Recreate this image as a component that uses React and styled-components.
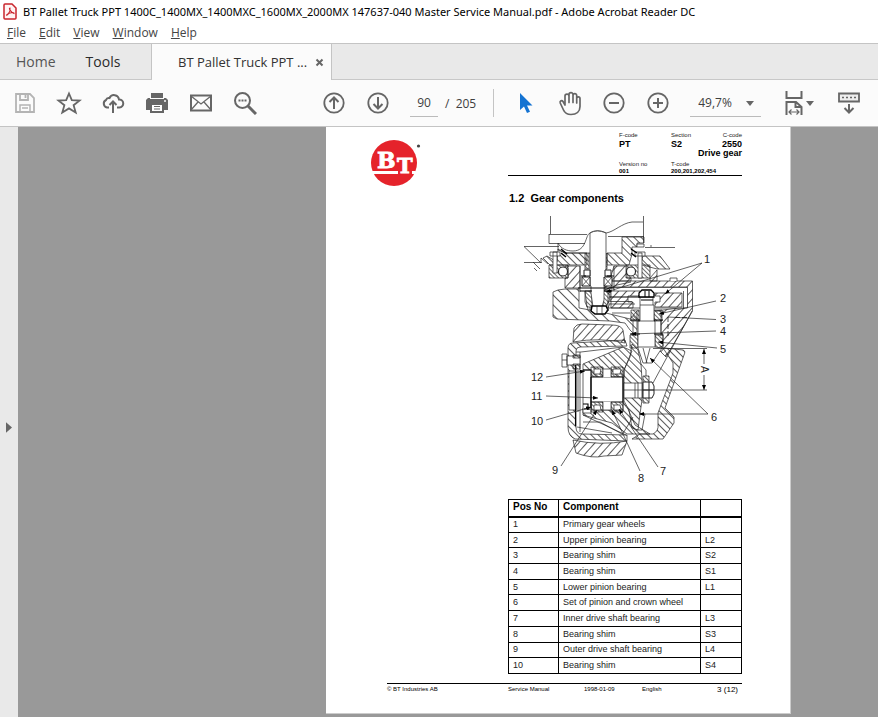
import React from 'react';
import styled, { createGlobalStyle } from 'styled-components';

const GlobalStyle = createGlobalStyle`
  *, *::before, *::after { box-sizing: border-box; }
  body { margin: 0; background: #999; font-family: "Open Sans", "Noto Sans", sans-serif; }
  button, input, select { font: inherit; color: inherit; border: 0; background: none; padding: 0; margin: 0; border-radius: 0; }
  svg { display: block; }
`;

const Window = styled.div`
  min-height: 100vh;
  display: flex;
  flex-direction: column;
  background: #999;
  overflow: hidden;
`;

const TitleBar = styled.header`
  display: flex;
  align-items: center;
  gap: 6px;
  height: 23px;
  padding: 0 3px;
  background: #fff;
  color: #000;
  font-size: 12px;
  white-space: nowrap;
`;

const WindowTitle = styled.h1`
  margin: 0;
  font-family: "Noto Sans", "Open Sans", sans-serif;
  font-size: 11px;
  font-weight: 400;
  line-height: 22px;
`;

const MenuBar = styled.nav`
  display: flex;
  gap: 13px;
  height: 20px;
  padding: 0 7px;
  background: #fff;
  color: #444;
  font-size: 12px;
  line-height: 18px;
`;

const MenuButton = styled.button`
  line-height: 18px;
  height: 20px;
`;

const TabBar = styled.div`
  display: flex;
  height: 37px;
  background: #e9e9e9;
  border-top: 1px solid #c4c4c4;
  border-bottom: 1px solid #c8c8c8;
`;

const HomeTabs = styled.div`
  display: flex;
  gap: 30px;
  width: 152px;
  padding-left: 16px;
  border-right: 1px solid #c4c4c4;
`;

const Tab = styled.button`
  font-size: 14px;
  color: ${(p) => (p.$strong ? '#2b2b2b' : '#555')};
`;

const DocumentTab = styled.div`
  display: flex;
  align-items: center;
  gap: 8px;
  height: 36px;
  padding: 0 7px 0 26px;
  background: #fbfbfb;
  border-right: 1px solid #c4c4c4;
  color: #333;
  font-size: 13px;
`;

const Toolbar = styled.div`
  display: flex;
  align-items: center;
  height: 47px;
  padding-left: 3px;
  background: #fbfbfb;
  border-bottom: 1px solid #c4c4c4;
  color: #404040;
  font-size: 12px;
  white-space: nowrap;
`;

const ToolGroup = styled.div`
  display: flex;
  align-items: center;
  flex: none;
  margin-left: ${(p) => p.$gap || 0}px;
`;

const ToolButton = styled.button`
  display: flex;
  align-items: center;
  justify-content: center;
  gap: 3px;
  flex: none;
  width: 44px;
  height: 44px;
`;

const PageInput = styled.input`
  width: 28px;
  height: 27px;
  border-bottom: 1px solid #bbb;
  text-align: center;
`;

const PageCount = styled.span`
  margin-left: 7px;
  white-space: pre;
`;

const Divider = styled.span`
  width: 1px;
  height: 28px;
  margin: 0 10px 0 17px;
  background: #c4c4c4;
`;

const ZoomBox = styled.label`
  display: grid;
  align-items: center;
  width: 71px;
  margin: 0 16px 0 10px;
  & > * { grid-area: 1 / 1; }
  & > svg { justify-self: end; margin-right: 7px; pointer-events: none; }
`;

const ZoomSelect = styled.select`
  appearance: none;
  height: 27px;
  padding-left: 8px;
  border-bottom: 1px solid #bbb;
`;

const Workspace = styled.main`
  display: flex;
  flex: 1;
`;

const Rail = styled.button`
  display: flex;
  align-items: center;
  width: 18px;
  padding: 10px 0 0 6px;
  background: #e9e9e9;
`;

const Viewer = styled.div`
  flex: 1;
  display: grid;
  grid-template-columns: minmax(0, 308fr) auto minmax(0, 87fr);
  align-items: start;
`;

const Sheet = styled.article`
  grid-column: 2;
  padding: 5px 48px 18px 45px;
  margin-bottom: 2px;
  background: #fff;
  border-bottom: 1px solid #ccc;
  border-right: 1px solid #ccc;
  color: #000;
  font-family: "Liberation Sans", Arial, sans-serif;
`;

const SheetBody = styled.div`
  display: grid;
  grid-template-columns: 137px 234px;
`;

const LogoCell = styled.div`
  padding-top: 7px;
`;

const CodeGrid = styled.dl`
  display: grid;
  grid-template-columns: 52px 1fr auto;
  grid-template-rows: 7px 9px 11px 9px 7px;
  height: 44px;
  margin: 0;
  padding-left: 111px;
  border-bottom: 1px solid #000;
  white-space: nowrap;
  font-weight: 700;
`;

const CodeLabel = styled.dt`
  font-size: 6px;
  font-weight: 400;
  line-height: 8px;
  text-align: ${(p) => (p.$right ? 'right' : 'left')};
  color: #222;
  grid-row: ${(p) => p.$row};
  align-self: end;
`;

const CodeValue = styled.dd`
  margin: 0;
  font-size: ${(p) => (p.$small ? 6 : 9)}px;
  line-height: ${(p) => (p.$small ? 7 : 10)}px;
  grid-row: ${(p) => p.$row};
  grid-column: ${(p) => p.$col};
  text-align: ${(p) => (p.$right ? 'right' : 'left')};
`;

const SectionTitle = styled.h2`
  margin: 15px 0 5px 1px;
  font-size: 11px;
  line-height: 15px;
  white-space: pre;
`;

const Figure = styled.figure`
  margin: 0 0 10px;
`;

const PartsTable = styled.table`
  width: 100%;
  height: 175px;
  table-layout: fixed;
  border-collapse: collapse;
  font-size: 9px;
  line-height: 10px;
  text-align: left;
  color: #222;

  th, td { height: 15px; padding: 0 0 1px 4px; border: 1px solid #000; }
  thead th { height: 17px; font-size: 10px; line-height: 12px; border-bottom-width: 2px; color: #000; }
`;

const SheetFooter = styled.footer`
  display: grid;
  grid-template-columns: 121px 76px 58px 1fr auto;
  margin: 9px 0 0 16px;
  padding: 1px 4px 0 0;
  border-top: 1px solid #000;
  font-size: 6px;
  line-height: 8px;
`;

const PageNumber = styled.span`
  font-size: 8px;
  line-height: 10px;
`;

const g = '#666';

const PdfIcon = () => (
  <svg width="14" height="17" viewBox="0 0 14 17" fill="none">
    <path d="M1 2Q1 1 2 1H9L13 5V15Q13 16 12 16H2Q1 16 1 15Z" fill="#fff4f4" stroke="#c9252d" strokeWidth="1.500" />
    <path d="M7 5C5 5 9 10 11 10.500C12 9 5 9.500 3.500 12C3 13.500 8 9 7 5Z" stroke="#c9252d" strokeWidth="1.100" />
  </svg>
);

const CloseIcon = () => (
  <svg width="9" height="9" viewBox="0 0 9 9"><path d="M1.500 1.500L7.500 7.500M7.500 1.500L1.500 7.500" stroke="#666" strokeWidth="2" /></svg>
);

const SaveIcon = () => (
  <svg width="22" height="22" viewBox="0 0 22 22" fill="none" stroke="#b4b4b4" strokeWidth="1.800">
    <path d="M2 2H16L20 6V20H2Z" /><path d="M6 2V8H14V2" /><path d="M11.500 3V6" /><path d="M6 20V13H16V20M8 16H14" strokeWidth="1.500" />
  </svg>
);
const StarIcon = () => (
  <svg width="26" height="24" viewBox="0 0 26 24" fill="none" stroke={g} strokeWidth="1.800" strokeLinejoin="miter">
    <path d="M13 2.500L15.800 9.200L23.500 9.600L17.600 14.200L19.700 21.500L13 17.400L6.300 21.500L8.400 14.200L2.500 9.600L10.200 9.200Z" />
  </svg>
);
const CloudIcon = () => (
  <svg width="24" height="24" viewBox="0 0 24 24" fill="none" stroke={g} strokeWidth="2">
    <path d="M8 16.500H6A4 4 0 0 1 5 9A3 3 0 0 1 8.500 7A5 5 0 0 1 18 8.500A4 4 0 0 1 18.500 16.500H16" />
    <path d="M12 22V11M8.500 14L12 10.500L15.500 14" />
  </svg>
);
const PrintIcon = () => (
  <svg width="24" height="22" viewBox="0 0 24 22">
    <path d="M6 1H18V6H6Z" fill={g} /><path d="M3 6H21L23 8V18H1V8Z" fill={g} />
    <path d="M5 6.500H19" stroke="#fbfbfb" /><circle cx="20" cy="9" r="1" fill="#fbfbfb" />
    <path d="M6 12H18V20H6Z" fill="#fff" stroke={g} strokeWidth="2" /><path d="M9 14.500H15M9 17H15" stroke={g} />
  </svg>
);
const MailIcon = () => (
  <svg width="24" height="18" viewBox="0 0 24 18" fill="none" stroke={g}>
    <path d="M2 1.500H22V16.500H2Z" strokeWidth="2" /><path d="M2 2L12 10L22 2M2 16L9 8M22 16L15 8" strokeWidth="1.300" />
  </svg>
);
const SearchIcon = () => (
  <svg width="24" height="24" viewBox="0 0 24 24" fill="none" stroke={g}>
    <circle cx="9.500" cy="9.500" r="7.500" strokeWidth="2" /><path d="M15 15L23 23" strokeWidth="3" />
    <path d="M5.500 9.500H13.500" strokeWidth="2" strokeDasharray="2 1" />
  </svg>
);
const CircleIcon = ({ d }) => (
  <svg width="22" height="22" viewBox="0 0 22 22" fill="none" stroke={g} strokeWidth="2">
    <circle cx="11" cy="11" r="9.700" strokeWidth="1.800" /><path d={d} />
  </svg>
);
const CursorIcon = () => (
  <svg width="14" height="22" viewBox="0 0 14 22"><path d="M1 1V18L5 14.500L8 21L11 19.700L8 13.500H13.500Z" fill="#1473d2" /></svg>
);
const HandIcon = () => (
  <svg width="24" height="25" viewBox="0 0 24 25" fill="none" stroke={g} strokeWidth="1.700" strokeLinecap="round" strokeLinejoin="round">
    <path d="M7 14L5 10.500C4 9 1.500 9.800 2.200 12L5.500 19C7 22.500 9.500 23.500 13 23.500C18.500 23.500 22 20.500 22 15.500V7.500C22 5.200 18.700 5.200 18.700 7.500V12M18.700 10V4.500C18.700 2 15 2 15 4.500V11.500M15 6V3.500C15 1 11 1 11 3.500V11.500M11 6V5C11 2.500 7 2.500 7 5V14" />
  </svg>
);
const Caret = () => (
  <svg width="8" height="5" viewBox="0 0 8 5"><path d="M0 0H8L4 5Z" fill={g} /></svg>
);
const FitIcon = () => (
  <svg width="18" height="26" viewBox="0 0 18 26" fill="none" stroke={g} strokeWidth="2">
    <path d="M1.500 1V8H16.500V1" /><path d="M1.500 25V12H11L16.500 17V25M10.500 12V17H16" />
    <path d="M4 22H14M6.500 19.500L4 22L6.500 24.500M11.500 19.500L14 22L11.500 24.500" strokeWidth="1.200" />
  </svg>
);
const KeyboardIcon = () => (
  <svg width="22" height="22" viewBox="0 0 22 22" fill="none" stroke={g} strokeWidth="2">
    <path d="M1 1.500H21V9.500H1Z" fill="#eee" strokeWidth="1.800" /><path d="M4 5.500H18" strokeWidth="1.500" strokeDasharray="2 2" />
    <path d="M11 12V20M6.500 16L11 20.500L15.500 16" />
  </svg>
);

const BtLogo = () => (
  <svg width="52" height="48" viewBox="371 139 52 48" role="img" aria-label="BT">
    <circle cx="394" cy="163" r="23" fill="#e5232b" />
    <g fill="#fff" stroke="#fff" strokeWidth="0.800" fontFamily='"DejaVu Serif", serif' fontWeight="700">
      <text x="377" y="168" fontSize="22">B</text>
      <text x="397" y="173" fontSize="21">T</text>
    </g>
    <path d="M371.500 171H398V174H373Z" fill="#fff" /><path d="M412 171H416L415 174H412Z" fill="#fff" />
    <circle cx="418.500" cy="146" r="1.600" fill="#444" />
  </svg>
);

const LABELS = [
  [704, 263, '1'], [720, 302, '2'], [720, 323, '3'], [720, 335, '4'], [720, 353, '5'], [711, 421, '6'],
  [660, 475, '7'], [638, 482, '8'], [552, 474, '9'], [531, 425, '10'], [531, 400, '11'], [531, 381, '12'],
];

const GearDrawing = () => (
  <svg width="100%" viewBox="508 211 234 278" role="img" aria-label="Cross section of the drive gear with numbered parts">
    <defs>
      <pattern id="back" width="5" height="5" patternUnits="userSpaceOnUse" patternTransform="rotate(-45)"><path d="M0 0V5" stroke="#222" strokeWidth="1.500" /></pattern>
      <pattern id="wide" width="7" height="7" patternUnits="userSpaceOnUse" patternTransform="rotate(-45)"><path d="M0 0V7" stroke="#222" strokeWidth="1.500" /></pattern>
      <pattern id="forward" width="6" height="6" patternUnits="userSpaceOnUse" patternTransform="rotate(42)"><path d="M0 0V6" stroke="#222" strokeWidth="1.500" /></pattern>
      <pattern id="dense" width="3" height="3" patternUnits="userSpaceOnUse" patternTransform="rotate(-45)"><path d="M0 0V3" stroke="#222" strokeWidth="1.300" /></pattern>
      <marker id="tip" markerWidth="5" markerHeight="4" refX="5" refY="2" orient="auto-start-reverse" markerUnits="userSpaceOnUse"><path d="M0 0L5 2L0 4Z" fill="#000" stroke="none" /></marker>
    </defs>
    <g fill="none" stroke="#222" strokeWidth="0.700">
      {/* motor flange and ground line */}
      <path d="M550.500 216V234M643.500 216V243M549 234.500H587M549 234V243.500M549 243.500H585M608 236.500H644M524 246.500H559M524 246.500L541 263M524 262.500H542M541 262V258L548 264M533 262L540 269M534 268L537 271M645 247.500H675M651 247V245" />
      <path d="M643 222H632C622 223 614 232 606 233C601 230 594 230 590 233C585 235 587 251 573 251C567 251 561 249 558 243V250L565 253H590" />
      {/* upper housing */}
      <path d="M558 249L565 253H587V265H550L543 258L547 256L557 262Z" fill="url(#back)" />
      <path d="M622 237H644V243H637V247H632V254L629 265H607V253H622Z" fill="url(#back)" />
      <path d="M643 256H660L670 269H657L646 266L641 262Z" fill="url(#back)" />
      <path d="M565 266H580V288H565V278H568V268Z" fill="url(#forward)" />
      <path d="M614 266H627V278H631V281H611V276Z" fill="url(#forward)" />
      <path d="M657 270L650 278V281H657V270" fill="url(#forward)" />
      <path d="M549 265H568V278H549ZM626 265H650V278H626Z" fill="url(#dense)" />
      <circle cx="563" cy="271.500" r="4.500" fill="#fff" strokeWidth="1.100" /><circle cx="631" cy="271.500" r="4.500" fill="#fff" strokeWidth="1.100" />
      <path d="M553 252H557V273H553ZM550 252H560V256H550ZM638 253H642V278H638ZM635 252H645V256H635ZM637 244H644V247H637Z" fill="#fff" />
      <path d="M561 249L567 254M561 253L566 257M631 249L637 253M631 253L636 257" stroke="#000" strokeWidth="1.500" />
      {/* lower left casing */}
      <path d="M553 292L558 290L565 289H579V308L590 310L606 313L630 319L637 311V333H633L630 330L625 323L610 321L557 319L553 317Z" fill="url(#wide)" />
      {/* gear cover */}
      <path d="M611 281H692.500V311L680 333L666 357L657 348L663 346V334H661V311H655L687 307V287H611L600 292Z" fill="url(#forward)" />
      <path d="M670 281V278H677V281" fill="#fff" />
      <path d="M611 287.500H687.500V308H611Z" fill="#fff" />
      <path d="M608 291H640V296H628V302H633V308H608ZM655 293H682V307H655V302H660V296H655Z" fill="url(#forward)" />
      <path d="M610 301.500H632M683.500 291V309M610 304H635M608 288V291M600 292L617 285L631 282" />
      {/* motor shaft and bearings */}
      <path d="M585 253V269H589V253M607 253V269H603V253" fill="url(#dense)" />
      <path d="M585 291H592V307H587ZM603 291H610V298L606 307H603Z" fill="url(#dense)" />
      <path d="M590 233Q597 229 606 233V286H604V300L602 307H593L591 293V286H590Z" fill="#fff" />
      <path d="M584 270H590V276H584ZM605 270H611V276H605ZM582 277H590V286H582ZM604 277H612V286H604Z" fill="#fff" strokeWidth="1" />
      <path d="M582 277L590 286M590 277L582 286M604 277L612 286M612 277L604 286M580 266V292M614 266V291" />
      <path d="M578 288H614M580 291H592M604 291H612M581 276H586M607 276H614" stroke="#000" strokeWidth="1.200" />
      <path d="M592 306L591 311L595 314H605L608 310L606 306Z" fill="#fff" strokeWidth="1.500" stroke="#000" />
      <path d="M597 306V314M602 306V314M590 307V311M608 307V311M610 303L606 313M612 313H630M585 291V302L588 309" />
      {/* pinion shaft */}
      <path d="M631 310H639V321H631ZM654 310H662V321H654ZM630 335H638V348H630ZM655 335H663V348H655Z" fill="url(#dense)" />
      <path d="M640 297H653V305H654V321H655V347L662 348L652 363H643L638 348V321H640Z" fill="#fff" />
      <path d="M643 348L647 363M650 348L646 363M638 321H655M640 305H653M638 347H655M633 320V336M661 320V336" />
      <path d="M639 297V293L642 290H651L654 293V297Z" fill="#fff" stroke="#000" strokeWidth="1.300" />
      <path d="M645 291V297M649 291V297M630 320H640M654 320H663M630 334H640M654 334H663M641 300H653M609 297H640" stroke="#000" strokeWidth="1" />
      <path d="M668 317V336M675 317.500H687" stroke="#000" strokeDasharray="5 2" />
      {/* right housing */}
      <path d="M665 348L683 350Q686 351 684 355L665 408L674 417V423L663 439H632L640 434H653Q659 431 658 424V413L673 373V363L663 348Z" fill="url(#back)" />
      <path d="M692 311L653 383" />
      {/* tyre */}
      <path d="M573 342L574 328Q576 324 582 324L612 325Q621 325 623 330L625 343Q600 337 573 342Z" fill="url(#forward)" />
      <path d="M573 440L576 453Q592 459 604 456L622 455L627 441Q600 446 573 440Z" fill="url(#forward)" />
      {/* wheel rim */}
      <path fillRule="evenodd" d="M568 348Q568 343 573 343L625 340L627 346L580 347Q576 347 576 351V427Q576 434 582 434L627 435V441L575 439Q568 436 568 427Z" fill="url(#back)" />
      <path d="M583 364L623 347L632 351L624 370V377H591V371H583Z" fill="url(#back)" />
      <path d="M591 408H583V415L612 423L627 434H650L635 425L628 409L623 402V410H591Z" fill="url(#back)" />
      <path d="M581 352L623 347M583 415L626 435M580 352V432M576 352H581M577 427L612 433M583 422H600L622 434M622 435L633 417" />
      {/* crown wheel */}
      <path d="M632 344L638 350L641 364L642 380V400L640 414L638 430L632 428L629 410L624 401V370L630 357Z" fill="url(#back)" />
      <path d="M640 414H645L642 430H636M641 364L646 370V376" />
      {/* hub and bearings */}
      <path d="M569 371H576V410H569ZM578 370V412M583 370H591V413H583ZM591 377H623V402H591ZM624 383H642V398H624ZM635 383V398M638 383V398" fill="#fff" />
      <path d="M591 367H603V377H591ZM611 367H623V377H611ZM591 402H603V412H591ZM611 402H623V412H611Z" fill="url(#dense)" />
      <path d="M594 369H601L600 374H594ZM613 369H621L620 374H613ZM594 405H600L601 410H594ZM614 405H620L621 410H614Z" fill="#fff" />
      <path d="M603 377V369H611V377M603 402V410H611V402" fill="#fff" />
      <path d="M583 370H591M584 409H590M591 377V408M575.500 359V426M623 377V402M583 404H588V410" stroke="#000" strokeWidth="1.100" />
      <path d="M562 354H567V367H562ZM567 356H580V365H567ZM562 360H567" fill="#fff" />
      <path d="M573 355H580V358H573ZM573 364H580V369H573Z" fill="url(#dense)" />
      <path d="M643 376H649V403H643Z" fill="url(#dense)" />
      <path d="M643 382H652L654 386V394L652 398H643ZM643 390H654M649 382V398" fill="#fff" strokeWidth="1" />
      {/* dimension and leader lines */}
      <path d="M653 348.500H707M624 390H707" />
      <g stroke="#222">
        <path d="M704 364V349" markerEnd="url(#tip)" />
        <path d="M704 375V390" markerEnd="url(#tip)" />
        <path d="M702 263L665 294" markerEnd="url(#tip)" />
        <path d="M702 263L606 292" markerEnd="url(#tip)" />
        <path d="M716 301L659 314" markerEnd="url(#tip)" />
        <path d="M708 414L650 358" markerEnd="url(#tip)" />
        <path d="M708 414H639" markerEnd="url(#tip)" />
        <path d="M716 319.500L668 317" />
        <path d="M716 331L631 334" markerEnd="url(#tip)" />
        <path d="M717 348L658 342" markerEnd="url(#tip)" />
        <path d="M546 377L585 371" markerEnd="url(#tip)" />
        <path d="M546 396L598 398" markerEnd="url(#tip)" />
        <path d="M546 420L591 407" markerEnd="url(#tip)" />
        <path d="M561 466L597 410" markerEnd="url(#tip)" />
        <path d="M640 471L612 410" markerEnd="url(#tip)" />
        <path d="M658 467L619 409" markerEnd="url(#tip)" />
      </g>
    </g>
    <g fontFamily='"Liberation Sans", Arial, sans-serif' fontSize="11" fill="#222">
      {LABELS.map(([x, y, label]) => <text key={label} x={x} y={y}>{label}</text>)}
      <text transform="translate(701 366) rotate(90)" fontSize="10">A</text>
    </g>
  </svg>
);

const MENUS = ['File', 'Edit', 'View', 'Window', 'Help'];

const PARTS = [
  ['1', 'Primary gear wheels', ''],
  ['2', 'Upper pinion bearing', 'L2'],
  ['3', 'Bearing shim', 'S2'],
  ['4', 'Bearing shim', 'S1'],
  ['5', 'Lower pinion bearing', 'L1'],
  ['6', 'Set of pinion and crown wheel', ''],
  ['7', 'Inner drive shaft bearing', 'L3'],
  ['8', 'Bearing shim', 'S3'],
  ['9', 'Outer drive shaft bearing', 'L4'],
  ['10', 'Bearing shim', 'S4'],
];

export default function App() {
  return (
    <Window>
      <GlobalStyle />
      <TitleBar>
        <PdfIcon />
        <WindowTitle>BT Pallet Truck PPT 1400C_1400MX_1400MXC_1600MX_2000MX 147637-040 Master Service Manual.pdf - Adobe Acrobat Reader DC</WindowTitle>
      </TitleBar>
      <MenuBar>
        {MENUS.map((name) => <MenuButton key={name}><u>{name[0]}</u>{name.slice(1)}</MenuButton>)}
      </MenuBar>
      <TabBar>
        <HomeTabs>
          <Tab>Home</Tab>
          <Tab $strong>Tools</Tab>
        </HomeTabs>
        <DocumentTab>
          <span>BT Pallet Truck PPT ...</span>
          <button aria-label="Close tab"><CloseIcon /></button>
        </DocumentTab>
      </TabBar>
      <Toolbar>
        <ToolGroup>
          <ToolButton aria-label="Save" disabled><SaveIcon /></ToolButton>
          <ToolButton aria-label="Star"><StarIcon /></ToolButton>
          <ToolButton aria-label="Upload"><CloudIcon /></ToolButton>
          <ToolButton aria-label="Print"><PrintIcon /></ToolButton>
          <ToolButton aria-label="Email"><MailIcon /></ToolButton>
          <ToolButton aria-label="Find"><SearchIcon /></ToolButton>
        </ToolGroup>
        <ToolGroup $gap={45}>
          <ToolButton aria-label="Previous page"><CircleIcon d="M11 17V6M6.500 10L11 5.500L15.500 10" /></ToolButton>
          <ToolButton aria-label="Next page"><CircleIcon d="M11 5V16M6.500 12L11 16.500L15.500 12" /></ToolButton>
        </ToolGroup>
        <ToolGroup $gap={10}>
          <PageInput aria-label="Page number" defaultValue="90" />
          <PageCount>{'/  205'}</PageCount>
          <Divider />
        </ToolGroup>
        <ToolGroup>
          <ToolButton aria-label="Select"><CursorIcon /></ToolButton>
          <ToolButton aria-label="Pan"><HandIcon /></ToolButton>
          <ToolButton aria-label="Zoom out"><CircleIcon d="M6 11H16" /></ToolButton>
          <ToolButton aria-label="Zoom in"><CircleIcon d="M6 11H16M11 6V16" /></ToolButton>
          <ZoomBox>
            <ZoomSelect aria-label="Zoom level" defaultValue="49,7%"><option>49,7%</option></ZoomSelect>
            <Caret />
          </ZoomBox>
          <ToolButton aria-label="Fit width"><FitIcon /><Caret /></ToolButton>
        </ToolGroup>
        <ToolGroup $gap={6}>
          <ToolButton aria-label="Show toolbar"><KeyboardIcon /></ToolButton>
        </ToolGroup>
      </Toolbar>
      <Workspace>
        <Rail aria-label="Open navigation pane">
          <svg width="6" height="11" viewBox="0 0 7 12"><path d="M0 0L7 6L0 12Z" fill="#666" /></svg>
        </Rail>
        <Viewer>
          <Sheet>
            <SheetBody>
              <LogoCell><BtLogo /></LogoCell>
              <div>
                <CodeGrid>
                  <CodeLabel $row={1}>F-code</CodeLabel>
                  <CodeValue $row={2} $col={1}>PT</CodeValue>
                  <CodeLabel $row={1}>Section</CodeLabel>
                  <CodeValue $row={2} $col={2}>S2</CodeValue>
                  <CodeLabel $row={1} $right>C-code</CodeLabel>
                  <CodeValue $row={2} $col={3} $right>2550</CodeValue>
                  <CodeValue $row={3} $col="2 / 4" $right>Drive gear</CodeValue>
                  <CodeLabel $row={4}>Version no</CodeLabel>
                  <CodeValue $row={5} $col={1} $small>001</CodeValue>
                  <CodeLabel $row={4}>T-code</CodeLabel>
                  <CodeValue $row={5} $col="2 / 4" $small>200,201,202,454</CodeValue>
                </CodeGrid>
                <SectionTitle>{'1.2  Gear components'}</SectionTitle>
                <Figure><GearDrawing /></Figure>
                <PartsTable>
                  <colgroup><col width="50" /><col /><col width="41" /></colgroup>
                  <thead><tr><th>Pos No</th><th>Component</th><th aria-label="Code" /></tr></thead>
                  <tbody>
                    {PARTS.map(([pos, name, code]) => (
                      <tr key={pos}><td>{pos}</td><td>{name}</td><td>{code}</td></tr>
                    ))}
                  </tbody>
                </PartsTable>
              </div>
            </SheetBody>
            <SheetFooter>
              <span>© BT Industries AB</span>
              <span>Service Manual</span>
              <span>1998-01-09</span>
              <span>English</span>
              <PageNumber>3 (12)</PageNumber>
            </SheetFooter>
          </Sheet>
        </Viewer>
      </Workspace>
    </Window>
  );
}
